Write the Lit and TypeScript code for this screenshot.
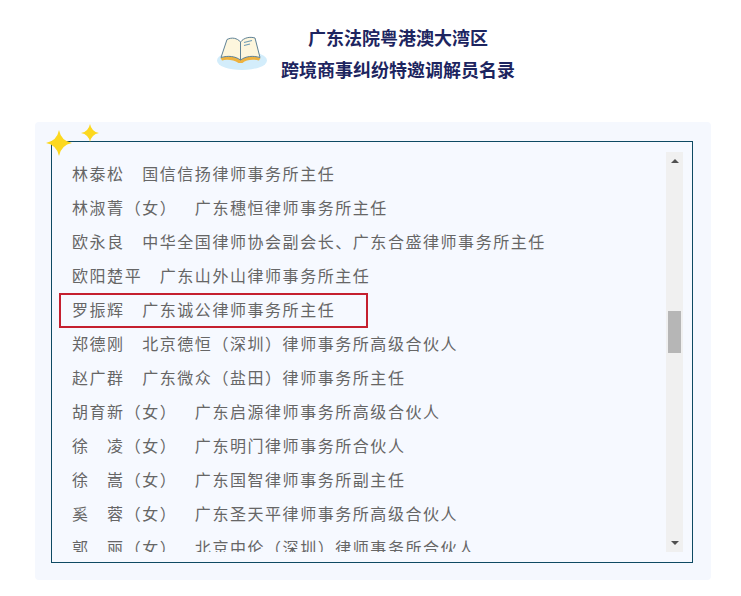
import { LitElement, html, css, svg } from "lit";
import { customElement } from "lit/decorators.js";

const ROWS = [
  "林泰松　国信信扬律师事务所主任",
  "林淑菁（女）　广东穗恒律师事务所主任",
  "欧永良　中华全国律师协会副会长、广东合盛律师事务所主任",
  "欧阳楚平　广东山外山律师事务所主任",
  "罗振辉　广东诚公律师事务所主任",
  "郑德刚　北京德恒（深圳）律师事务所高级合伙人",
  "赵广群　广东微众（盐田）律师事务所主任",
  "胡育新（女）　广东启源律师事务所高级合伙人",
  "徐　凌（女）　广东明门律师事务所合伙人",
  "徐　嵩（女）　广东国智律师事务所副主任",
  "奚　蓉（女）　广东圣天平律师事务所高级合伙人",
  "郭　丽（女）　北京中伦（深圳）律师事务所合伙人",
];
const HIGHLIGHT = 4;

const star = svg`<path d="M50 0 Q58 42 100 50 Q58 58 50 100 Q42 58 0 50 Q42 42 50 0 Z" fill="#fcd81f"/>`;

@customElement("app-root")
export class AppRoot extends LitElement {
  static styles = css`
    :host {
      display: block;
      height: 596px;
      background: #fff;
      font-family: "Noto Sans CJK SC", "Liberation Sans", sans-serif;
      overflow: hidden;
    }
    .header {
      display: flex;
      align-items: center;
      gap: 14px;
      height: 122px;
      box-sizing: border-box;
      padding: 21px 0 37px 217px;
    }
    .book { width: 50px; height: 34px; display: block; flex: none; }
    .title {
      width: 234px;
      text-align: center;
      font-size: 18px;
      font-weight: 700;
      line-height: 32px;
      color: #1d2560;
    }
    .panel {
      position: relative;
      margin: 0 30px 0 35px;
      height: 458px;
      box-sizing: border-box;
      padding: 19px 18px 17px 16px;
      background: #f5f8fe;
      border-radius: 4px;
    }
    .star { position: absolute; display: block; }
    .star.big { left: 11px; top: 8px; width: 26px; height: 26px; }
    .star.small { left: 46px; top: 2px; width: 18px; height: 18px; }
    .frame {
      display: flex;
      height: 100%;
      box-sizing: border-box;
      padding: 10px 9px 10px 0;
      border: 1px solid #0e4a63;
      background: #f6f9ff;
    }
    .list {
      flex: 1;
      min-width: 0;
      overflow: hidden;
      padding: 4px 0 0 20px;
      box-sizing: border-box;
    }
    .row {
      position: relative;
      height: 34px;
      line-height: 34px;
      font-size: 16px;
      letter-spacing: 1.55px;
      text-spacing-trim: space-all;
      color: #666;
      white-space: nowrap;
    }
    .row.hl::after {
      content: "";
      position: absolute;
      left: -13px;
      top: 1px;
      width: 305px;
      height: 31px;
      border: 2px solid #c5202f;
    }
    .track {
      position: relative;
      flex: none;
      width: 17px;
      background: #f0f0f0;
    }
    .thumb {
      position: absolute;
      left: 2px;
      top: 159px;
      width: 13px;
      height: 42px;
      background: #b6b6b6;
    }
    .arrow {
      position: absolute;
      left: 5px;
      width: 0;
      height: 0;
      border-left: 4px solid transparent;
      border-right: 4px solid transparent;
    }
    .arrow.up { top: 7px; border-bottom: 4px solid #505050; }
    .arrow.down { bottom: 7px; border-top: 4px solid #505050; }
  `;

  render() {
    return html`
      <div class="header">
        <svg class="book" viewBox="0 0 50 34" aria-hidden="true">
          <ellipse cx="25" cy="24.5" rx="25" ry="9.5" fill="#d3edfb"/>
          <path d="M3.5 22 C11 19 18 20 23.5 24 C29 20 36 19 43.5 22 L42 24.5 C35 23 29 24 25.5 27 L21.5 27 C17 24 10 23 5 24.5 Z" fill="#eeb23f"/>
          <path d="M4 21.5 L10 3.5 C15 1 20 2 23.5 6 L23.5 24 C18 20 11 19.5 4 21.5 Z" fill="#fdf6dd" stroke="#5f8296" stroke-width="1"/>
          <path d="M23.5 6 C27 1.5 33 0.5 38 2 L43 21.5 C36 19.5 29 20 23.5 24 Z" fill="#fdf6dd" stroke="#5f8296" stroke-width="1"/>
          <path d="M27 6.5 L35 4.5 M27 9.5 L33 8" stroke="#6f9cb5" stroke-width="1.2" fill="none"/>
        </svg>
        <div class="title">广东法院粤港澳大湾区<br />跨境商事纠纷特邀调解员名录</div>
      </div>
      <div class="panel">
        <div class="frame">
          <div class="list">
            ${ROWS.map((r, i) => html`<div class="row ${i === HIGHLIGHT ? "hl" : ""}">${r}</div>`)}
          </div>
          <div class="track">
            <div class="arrow up"></div>
            <div class="thumb"></div>
            <div class="arrow down"></div>
          </div>
        </div>
        <svg class="star big" viewBox="0 0 100 100" aria-hidden="true">${star}</svg>
        <svg class="star small" viewBox="0 0 100 100" aria-hidden="true">${star}</svg>
      </div>
    `;
  }
}
